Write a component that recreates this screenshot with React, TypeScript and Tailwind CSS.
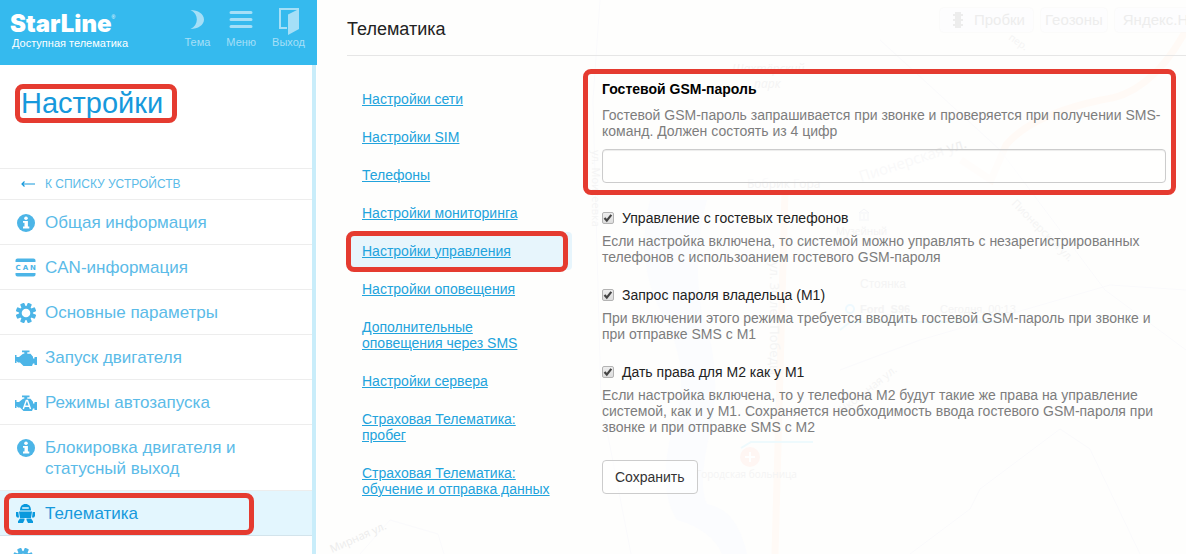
import React, { useState } from 'react';
import clsx from 'clsx';

const InfoIcon = () => (
  <svg viewBox="0 0 18 18" className="w-[18px] h-[18px]">
    <circle cx="9" cy="9" r="9" fill="currentColor" />
    <circle cx="9" cy="4.200" r="1.800" fill="#fff" />
    <path d="M6 7h4.900v5.600h1.400v1.900H6v-1.900h1.500V8.700H6z" fill="#fff" />
  </svg>
);

const CanIcon = () => (
  <svg viewBox="0 0 21 19" className="w-[21px] h-[19px]" fill="currentColor">
    <path d="M.5 4V2.200Q.5.500 2.500.500h16q2 0 2 1.700V4zM.5 15h20v1.800q0 1.700-2 1.700h-16q-2 0-2-1.700z" />
    <g textAnchor="middle" fontSize="7" fontWeight="bold" fontFamily="DejaVu Sans, sans-serif">
      <text x="3" y="12">C</text>
      <text x="10.500" y="12">A</text>
      <text x="18" y="12">N</text>
    </g>
  </svg>
);

const GearIcon = () => (
  <svg viewBox="0 0 20 20" className="w-5 h-5" fill="currentColor">
    {[22.5, 67.5, 112.5, 157.5].map((angle) => (
      <rect key={angle} x="7.8" y="-.3" width="4.400" height="20.600" rx="1" transform={`rotate(${angle} 10 10)`} />
    ))}
    <circle cx="10" cy="10" r="7" />
    <circle cx="10" cy="10" r="4.300" fill="#fff" />
  </svg>
);

const EngineIcon = ({ auto }: { auto?: boolean }) => (
  <svg viewBox="0 0 22 16" className="w-[22px] h-4" fill="currentColor">
    <path d="M7 .5h7.500v1.700h-2.200v1.600h3.200l2.500 3v1.700h1.500V7H22v8h-2.500v-1.500H18L17 16H8.500L5 12.500H3L1.500 11v2H0V5h1.500v2H4l4-3.200h1.300V2.200H7z" />
    {auto && (
      <path d="M8.300 14l3-8.500h1.200l3 8.500M9.600 11.300h5" fill="none" stroke="#fff" strokeWidth="1.400" />
    )}
  </svg>
);

const RobotIcon = () => (
  <svg viewBox="0 0 19 19" className="w-[19px] h-[19px]" fill="currentColor">
    <path d="M4 6.500C4 2.500 6 0 9.500 0S15 2.500 15 6.500z" />
    <rect x="6" y="3.200" width="7" height="1.500" rx=".7" fill="#e3f6fe" />
    <path d="M3 7.500h13l-1 6.500H4zM0 8h2.300l.7 5.500H1L0 12zM16.700 8H19v4l-1 1.500h-2zM4 14.500h4.500V16L7 19H2v-1.700zM10.500 14.500H15l2 2.800V19h-5l-1.500-3z" />
  </svg>
);

const menu = [
  { label: 'Общая информация', icon: <InfoIcon /> },
  { label: 'CAN-информация', icon: <CanIcon /> },
  { label: 'Основные параметры', icon: <GearIcon /> },
  { label: 'Запуск двигателя', icon: <EngineIcon /> },
  { label: 'Режимы автозапуска', icon: <EngineIcon auto /> },
  { label: 'Блокировка двигателя и статусный выход', icon: <InfoIcon /> },
  { label: 'Телематика', icon: <RobotIcon />, active: true },
];

const sections = [
  'Настройки сети',
  'Настройки SIM',
  'Телефоны',
  'Настройки мониторинга',
  'Настройки управления',
  'Настройки оповещения',
  'Дополнительные оповещения через SMS',
  'Настройки сервера',
  'Страховая Телематика: пробег',
  'Страховая Телематика: обучение и отправка данных',
];

const options = [
  {
    id: 'guest',
    label: 'Управление с гостевых телефонов',
    hint: 'Если настройка включена, то системой можно управлять с незарегистрированных телефонов с использоанием гостевого GSM-пароля',
  },
  {
    id: 'owner',
    label: 'Запрос пароля владельца (M1)',
    hint: 'При включении этого режима требуется вводить гостевой GSM-пароль при звонке и при отправке SMS с M1',
  },
  {
    id: 'rights',
    label: 'Дать права для M2 как у M1',
    hint: 'Если настройка включена, то у телефона M2 будут такие же права на управление системой, как и у M1. Сохраняется необходимость ввода гостевого GSM-пароля при звонке и при отправке SMS с M2',
  },
];

// Red frame drawn over the highlighted part of its relative parent
const Frame = ({ className }: { className: string }) => (
  <span className={clsx('absolute pointer-events-none border-5 border-[#e53b30] rounded-lg', className)} />
);

const MapBackground = () => (
  <svg
    viewBox="317 0 869 554"
    preserveAspectRatio="xMinYMin slice"
    className="absolute inset-0 w-full h-full pointer-events-none"
    fontFamily="Open Sans, sans-serif"
    fill="none"
    aria-hidden="true"
  >
    <path d="M650 200q-15 60 10 110 35 60 12 120-15 60 5 90 35 10 45 34h25q-10-45-40-50-10-20 5-80 10-60-10-110-10-60 5-114z" fill="#fbfcfe" />
    <path d="M1186 30q-35 65-85 70-70 15-95 45l-15 35-30-20M785 190l-10 364" stroke="#fffaf6" strokeWidth="7" />
    <path d="M600 0l-7 100 8 300 30 154M880 40l120 110 105 140 81 60M840 370l80-30 190-55 76 5M910 554l60-45 10-20 80-60 30 20 50 105M360 554l30-34 48 14 6 20" stroke="#fafafc" />
    <path d="M741 448l10-6h62M840 330l10-8h150" stroke="#eefafd" strokeWidth="2" />
    <circle cx="850" cy="309" r="4" stroke="#eef9fe" strokeWidth="2" />
    <circle cx="750" cy="457" r="10" fill="#fff6f3" />
    <path d="M750 452v10M745 457h10" stroke="#fff" strokeWidth="2" />
    <path d="M859 213l5-4 5 4zM860 214v5m4-5v5m4-5v5m-9 1h10" stroke="#f4f5f8" />
    <g fill="#f4f4f4" fontSize="12">
      <text x="732" y="73" fontStyle="italic">Шахтёрский</text>
      <text x="754" y="88" fontStyle="italic">парк</text>
      <text x="747" y="188">Бобрик Гора</text>
      <text x="836" y="235" fontSize="10">Музейный</text>
      <text x="860" y="288" fontFamily="Liberation Sans">Стоянка</text>
      <text x="860" y="313" fontFamily="Liberation Sans" fontSize="11" fontWeight="bold">Ford_S96</text>
      <text x="940" y="313" fontFamily="Liberation Sans" fontSize="11">Сегодня, 00:13</text>
      <text x="696" y="478" fontSize="10">Городская больница</text>
      <text x="332" y="553" fontSize="11" fill="#ececec" transform="rotate(-24 332 553)">Мирная ул.</text>
      <text x="861" y="182" fontSize="15" fill="#efefef" transform="rotate(-18 861 182)">Пионерская ул.</text>
      <text x="1011" y="204" fontSize="11" transform="rotate(45 1011 204)">Пионерская ул.</text>
      <text x="592" y="150" fontSize="11" transform="rotate(90 592 150)">ул. Моисеевка</text>
      <text x="770" y="262" fontSize="13" transform="rotate(90 770 262)">ул. 30 лет Победы</text>
      <text x="840" y="416" fontSize="11" transform="rotate(-38 840 416)">Школьная ул.</text>
      <text x="1008" y="39" fontSize="10" transform="rotate(35 1008 39)">пер.</text>
    </g>
  </svg>
);

const mapButton = 'flex items-center h-6 rounded-sm bg-[#fdfdfe] text-[15px] text-[#ededed] shadow-[0_0_2px_#f2f2f2] whitespace-nowrap';

const Sidebar = () => (
  <aside className="w-[317px] shrink-0 flex flex-col bg-white">
    <header className="h-[65px] shrink-0 flex bg-[#35baee] pl-3 pr-3">
      <div className="flex-1 pt-2.5">
        <div className="flex items-start h-[27px] -ml-0.5 text-white">
          <span className="font-[Inter] font-black text-2xl leading-[27px]">StarLine</span>
          <span className="text-[5px] leading-[14px]">®</span>
        </div>
        <div className="text-[11px] leading-3 text-white whitespace-nowrap">Доступная телематика</div>
      </div>
      <div className="flex gap-4 pt-2 text-[11px] leading-3 text-[#a5dff7]">
        <button className="flex flex-col items-center">
          <svg viewBox="0 0 14 28" className="w-3.5 h-7" fill="currentColor">
            <path d="M.5 2C8 2 14 6 14 11.500S8 21 .5 21C9 17 9 6 .5 2z" />
          </svg>
          Тема
        </button>
        <button className="flex flex-col items-center">
          <svg viewBox="0 0 24 28" className="w-6 h-7" stroke="currentColor" strokeWidth="3" strokeLinecap="round">
            <path d="M2 4.500h20M2 11.500h20M2 18.500h20" />
          </svg>
          Меню
        </button>
        <button className="flex flex-col items-center">
          <svg viewBox="0 0 20 28" className="w-5 h-7" fill="currentColor">
            <path d="M0 0h20v2H2v17h6v2H0z" />
            <path d="M9 6.500L20 1v20L9 27z" />
          </svg>
          Выход
        </button>
      </div>
    </header>

    <div className="flex-1 min-h-0 overflow-hidden border-r-4 border-[#c9edfa] mr-px">
      <div className="h-[103px] pt-5 pl-[21px]">
        <h1 className="relative inline-block text-[29px] leading-9 text-[#1699dc]">
          Настройки
          <Frame className="-left-1.5 -right-3.5 -top-px -bottom-0.5" />
        </h1>
      </div>
      <nav>
        <a href="#devices" className="flex items-center h-8 border-y border-[#ededed] text-[12px] text-[#5bbbe8]">
          <span className="w-[45px] flex justify-center pl-2.5 text-[#1699dc]">
            <svg viewBox="0 0 14 6" className="w-3.5 h-1.5" fill="none" stroke="currentColor">
              <path d="M14 3H1M3.500 .5L1 3l2.500 2.500" strokeWidth="1.200" />
            </svg>
          </span>
          К СПИСКУ УСТРОЙСТВ
        </a>
        {menu.map((item) => (
          <a
            key={item.label}
            href="#menu"
            className={clsx(
              'relative flex items-start py-3 pb-[11px] border-b text-[17px] leading-[21px]',
              item.active ? 'bg-[#e3f6fe] border-[#d3e4ec] text-[#1699dc]' : 'border-[#ededed] text-[#5bbbe8]'
            )}
          >
            <span
              className={clsx(
                'w-[45px] h-[21px] shrink-0 flex items-center justify-center pl-2 pr-0.5',
                item.active ? 'text-[#0a99dd]' : 'text-[#4cb5e7]'
              )}
            >
              {item.icon}
            </span>
            <span className="max-w-[220px]">{item.label}</span>
            {item.active && <Frame className="left-1 w-[250px] top-0.5 bottom-0" />}
          </a>
        ))}
        <a href="#more" aria-label="Ещё" className="block py-3 pl-[13px] text-[#4cb5e7]">
          <GearIcon />
        </a>
      </nav>
    </div>
  </aside>
);

const Option = ({ id, label, hint }: { id: string; label: string; hint: string }) => {
  const [checked, setChecked] = useState(true);

  return (
    <div className="mb-[22px]">
      <div className="flex items-center h-4">
        <span className="relative w-3 h-3 mr-2">
          <input
            id={id}
            type="checkbox"
            checked={checked}
            onChange={() => setChecked(!checked)}
            className="block appearance-none w-3 h-3 rounded-xs border border-[#b3b3b3] bg-linear-to-b from-[#eeeeee] to-[#dddddd]"
          />
          {checked && (
            <svg viewBox="0 0 12 12" className="absolute inset-0 w-3 h-3 pointer-events-none">
              <path d="M2.500 6l2.300 2.600L9.300 2.800" fill="none" stroke="#444" strokeWidth="2.200" />
            </svg>
          )}
        </span>
        <label htmlFor={id} className="text-[#222]">{label}</label>
      </div>
      <p className="mt-[7px] text-[#7d7d7d]">{hint}</p>
    </div>
  );
};

export default function App() {
  const [password, setPassword] = useState('');

  return (
    <div className="flex h-screen overflow-hidden bg-[#fefefd] font-['Liberation_Sans',Arial,sans-serif]">
      <Sidebar />

      <main className="relative flex-1 min-w-0 overflow-hidden">
        <MapBackground />
        <div className="absolute top-2 left-[623px] flex gap-2">
          <button className={clsx(mapButton, 'px-2 gap-2.5')}>
            <svg viewBox="0 0 12 16" className="w-3 h-4 ml-1" fill="#ededed">
              <path d="M3 0h6v16H3zM1 2h10v2H1zM1 7h10v2H1zM1 12h10v2H1z" />
            </svg>
            Пробки
          </button>
          <button className={clsx(mapButton, 'px-1')}>Геозоны</button>
          <button className={clsx(mapButton, 'px-2')}>Яндекс.На</button>
        </div>

        <div className="relative pl-[30px]">
          <h2 className="h-14 flex items-center pt-0.5 border-b border-[#e6e6e6] text-lg text-[#222]">Телематика</h2>

          <div className="flex gap-[30px] pt-6 pr-5 text-sm leading-4">
            <ul className="w-[225px] shrink-0">
              {sections.map((name) => {
                const active = name === 'Настройки управления';
                return (
                  <li key={name} className={clsx('relative px-[15px] py-[11px]', active && 'bg-[#e7f5fc] rounded-sm')}>
                    <a href="#section" className="text-[#22a3dc] underline">{name}</a>
                    {active && <Frame className="-left-px right-1 -top-px -bottom-0.5" />}
                  </li>
                );
              })}
            </ul>

            <form className="flex-1 min-w-0" onSubmit={(e) => e.preventDefault()}>
              <div className="relative pt-px mb-[27px]">
                <label htmlFor="gsm" className="block font-bold text-black">Гостевой GSM-пароль</label>
                <p className="my-2.5 text-[#7d7d7d]">
                  Гостевой GSM-пароль запрашивается при звонке и проверяется при получении SMS-команд. Должен состоять из 4 цифр
                </p>
                <input
                  id="gsm"
                  type="text"
                  value={password}
                  onChange={(e) => setPassword(e.target.value)}
                  className="block w-full h-[34px] px-3 rounded-sm border border-[#ccc] bg-white/60 shadow-[inset_0_1px_1px_rgba(0,0,0,0.075)]"
                />
                <Frame className="-left-[19px] -right-2.5 -top-[11px] -bottom-3" />
              </div>

              {options.map((option) => (
                <Option key={option.id} {...option} />
              ))}

              <button type="submit" className="h-[34px] px-3 mt-[3px] rounded-sm border border-[#ccc] bg-white/60 text-[#333]">
                Сохранить
              </button>
            </form>
          </div>
        </div>
      </main>
    </div>
  );
}
